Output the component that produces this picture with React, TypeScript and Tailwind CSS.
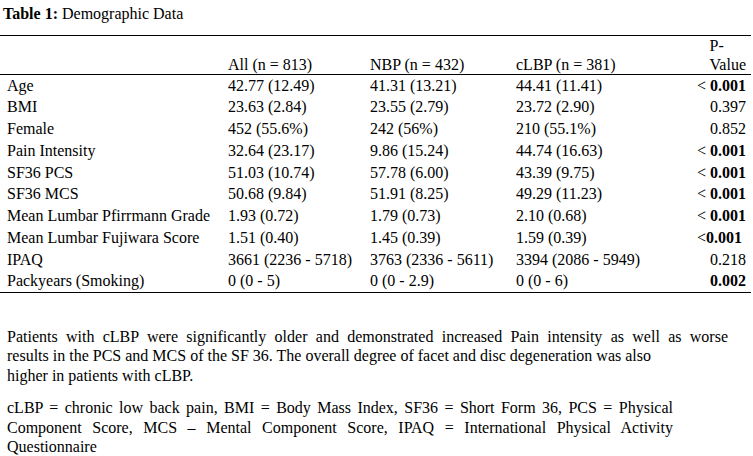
const rows: { label: string; all: string; nbp: string; clbp: string; p: string; lt?: string; bold?: boolean }[] = [
  { label: "Age", all: "42.77 (12.49)", nbp: "41.31 (13.21)", clbp: "44.41 (11.41)", lt: "< ", p: "0.001", bold: true },
  { label: "BMI", all: "23.63 (2.84)", nbp: "23.55 (2.79)", clbp: "23.72 (2.90)", p: "0.397" },
  { label: "Female", all: "452 (55.6%)", nbp: "242 (56%)", clbp: "210 (55.1%)", p: "0.852" },
  { label: "Pain Intensity", all: "32.64 (23.17)", nbp: "9.86 (15.24)", clbp: "44.74 (16.63)", lt: "< ", p: "0.001", bold: true },
  { label: "SF36 PCS", all: "51.03 (10.74)", nbp: "57.78 (6.00)", clbp: "43.39 (9.75)", lt: "< ", p: "0.001", bold: true },
  { label: "SF36 MCS", all: "50.68 (9.84)", nbp: "51.91 (8.25)", clbp: "49.29 (11.23)", lt: "< ", p: "0.001", bold: true },
  { label: "Mean Lumbar Pfirrmann Grade", all: "1.93 (0.72)", nbp: "1.79 (0.73)", clbp: "2.10 (0.68)", lt: "< ", p: "0.001", bold: true },
  { label: "Mean Lumbar Fujiwara Score", all: "1.51 (0.40)", nbp: "1.45 (0.39)", clbp: "1.59 (0.39)", lt: "<", p: "0.001 ", bold: true },
  { label: "IPAQ", all: "3661 (2236 - 5718)", nbp: "3763 (2336 - 5611)", clbp: "3394 (2086 - 5949)", p: "0.218" },
  { label: "Packyears (Smoking)", all: "0 (0 - 5)", nbp: "0 (0 - 2.9)", clbp: "0 (0 - 6)", p: "0.002", bold: true },
];

export default function App() {
  return (
    <div className="w-[753px] h-[456px] bg-white text-black text-[16px] font-['Liberation_Serif','Times_New_Roman',serif] overflow-hidden">
      <p className="pl-[3px] pt-[5px] leading-[18px]">
        <b>Table 1:</b> Demographic Data
      </p>

      <table className="mt-[12px] w-[751px] border-collapse table-fixed">
        <colgroup>
          <col className="w-[221px]" />
          <col className="w-[142px]" />
          <col className="w-[146px]" />
          <col className="w-[186px]" />
          <col className="w-[56px]" />
        </colgroup>
        <thead>
          <tr className="border-t-[1.5px] border-b-[1.5px] border-black align-bottom leading-[19px]">
            <th className="pl-[7px] font-normal text-left"></th>
            <th className="pl-[7px] font-normal text-left">All (n = 813)</th>
            <th className="pl-[7px] font-normal text-left">NBP (n = 432)</th>
            <th className="pl-[7px] font-normal text-left">cLBP (n = 381)</th>
            <th className="pr-[5px] font-normal text-right">
              <span className="inline-block text-left">
                P-
                <br />
                Value
              </span>
            </th>
          </tr>
        </thead>
        <tbody className="border-b-[1.5px] border-black">
          {rows.map((r) => (
            <tr key={r.label} className="h-[21.8px] leading-[18px]">
              <td className="pl-[7px] whitespace-nowrap">{r.label}</td>
              <td className="pl-[7px] whitespace-nowrap">{r.all}</td>
              <td className="pl-[7px] whitespace-nowrap">{r.nbp}</td>
              <td className="pl-[7px] whitespace-nowrap">{r.clbp}</td>
              <td className="pr-[5px] text-right whitespace-pre">
                {r.lt}
                {r.bold ? <b>{r.p}</b> : r.p}
              </td>
            </tr>
          ))}
        </tbody>
      </table>

      <div className="mt-[34px] ml-[7px] leading-[19.5px]">
        <p className="w-[721px] text-justify [text-align-last:justify]">
          Patients with cLBP were significantly older and demonstrated increased Pain intensity as well as worse
        </p>
        <p className="whitespace-nowrap">
          results in the PCS and MCS of the SF 36. The overall degree of facet and disc degeneration was also
        </p>
        <p>higher in patients with cLBP.</p>
      </div>

      <p className="mt-[13px] ml-[7px] w-[666px] text-justify leading-[19.5px]">
        cLBP = chronic low back pain, BMI = Body Mass Index, SF36 = Short Form 36, PCS = Physical Component Score, MCS –
        Mental Component Score, IPAQ = International Physical Activity Questionnaire
      </p>
    </div>
  );
}
